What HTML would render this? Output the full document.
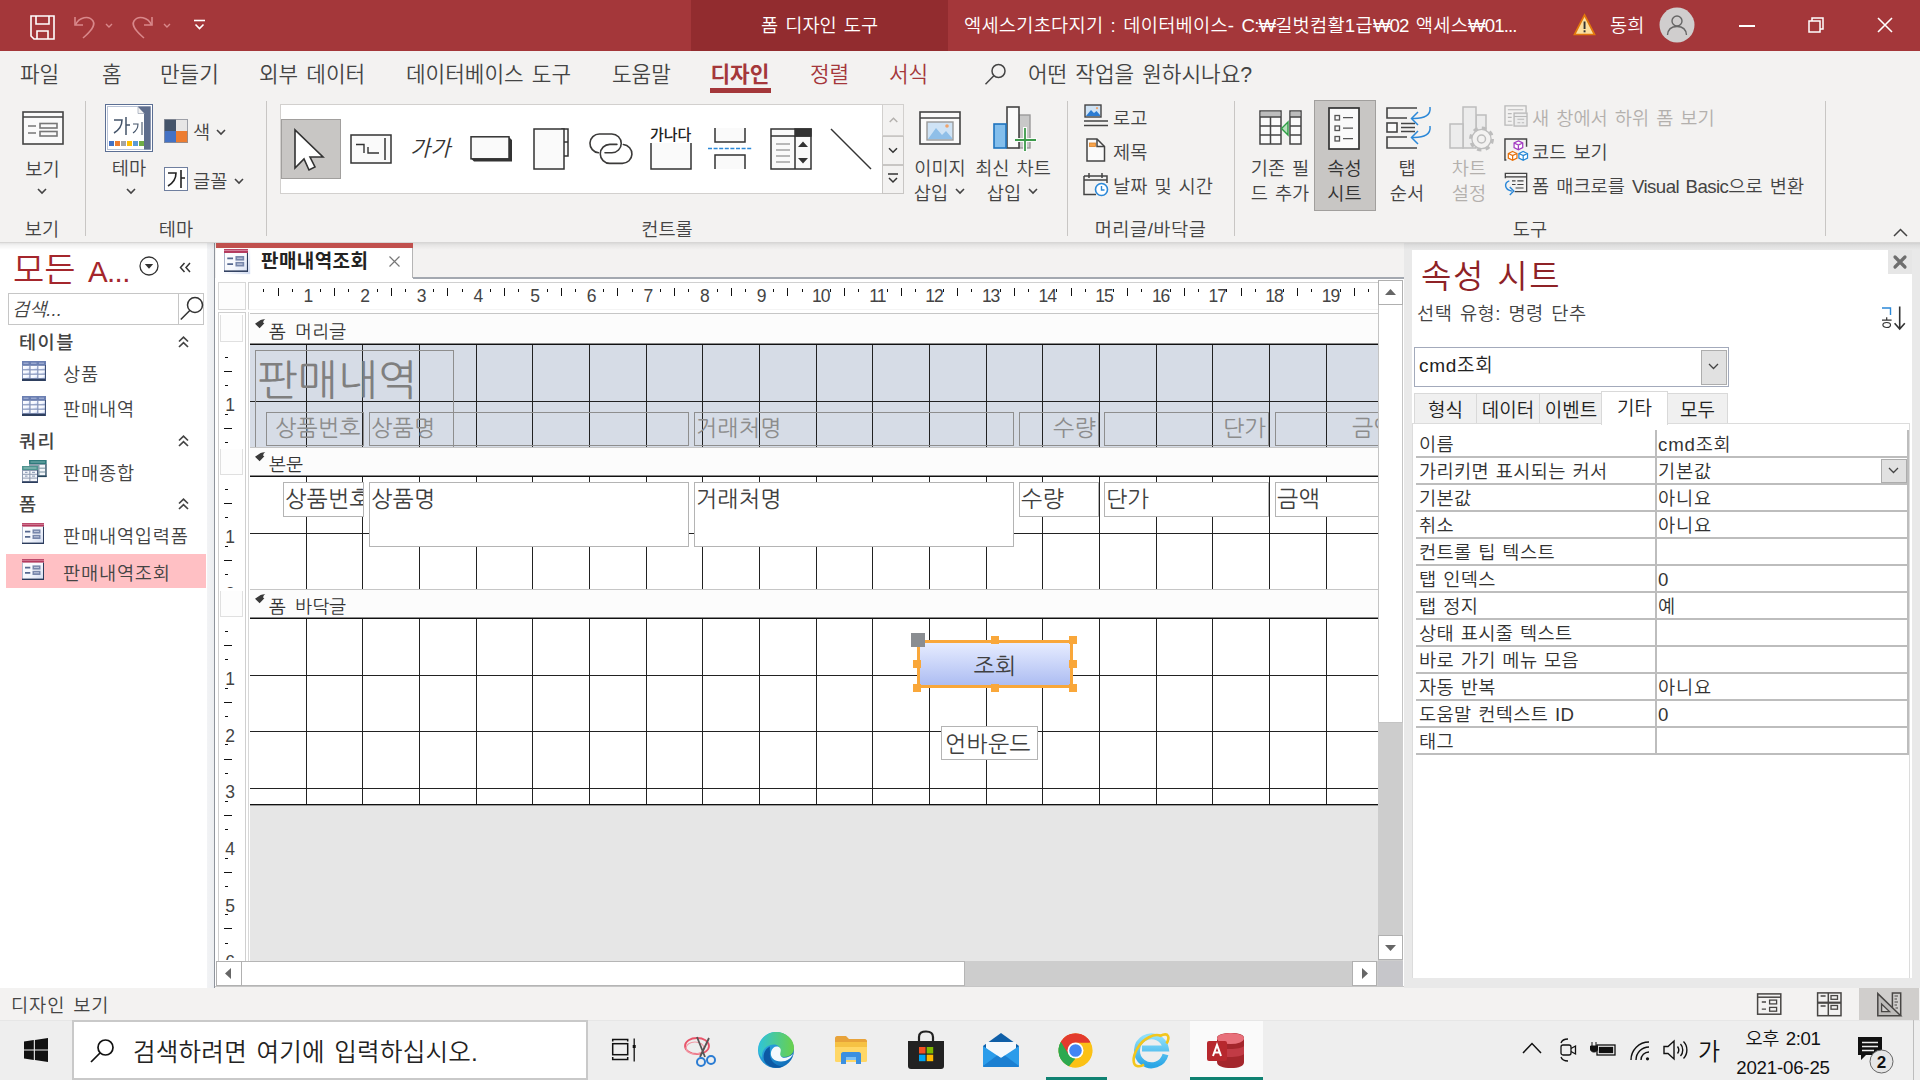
<!DOCTYPE html>
<html lang="ko"><head><meta charset="utf-8"><title>Access</title>
<style>
html,body{margin:0;padding:0}
body{width:1920px;height:1080px;position:relative;overflow:hidden;background:#f3f2f1;
 font-family:"Liberation Sans","Noto Sans CJK KR",sans-serif;color:#444;font-size:18.67px;font-weight:350;}
.a{position:absolute}
.t{position:absolute;white-space:nowrap;line-height:1;letter-spacing:0;word-spacing:0.1em}
svg{position:absolute;overflow:visible}
.g{font-family:"Liberation Sans","NanumGothic","Noto Sans CJK KR",sans-serif}
</style></head>
<body>
<svg width="0" height="0" style="left:0;top:0"><defs>
<linearGradient id="tc" x1="0" y1="0" x2="1" y2="1"><stop offset="0" stop-color="#fff"/><stop offset=".6" stop-color="#f4f7ff"/><stop offset="1" stop-color="#c3d0f0"/></linearGradient>
<linearGradient id="fg" x1="0" y1="0" x2="1" y2="1"><stop offset="0" stop-color="#fff"/><stop offset=".55" stop-color="#f6f8fd"/><stop offset="1" stop-color="#cfd9ef"/></linearGradient>
<linearGradient id="eg1" x1="0" y1="0" x2="1" y2="1"><stop offset="0" stop-color="#35c1f1"/><stop offset="1" stop-color="#0b5fb0"/></linearGradient>
<linearGradient id="eg2" x1="0" y1="0" x2="1" y2="0"><stop offset="0" stop-color="#2fc3d8"/><stop offset="1" stop-color="#6ad14a"/></linearGradient>
<linearGradient id="ieg" x1="0" y1="0" x2="0" y2="1"><stop offset="0" stop-color="#8fe0fb"/><stop offset="1" stop-color="#2ba6e6"/></linearGradient>
</defs></svg>
<div class="a" style="left:0;top:0;width:1920px;height:51px;background:#a4373a"></div>
<div class="a" style="left:691px;top:0;width:257px;height:51px;background:#922c2f"></div>
<svg style="left:29px;top:14px" width="27" height="27" viewBox="0 0 27 27" fill="none" stroke="#fff" stroke-width="1.6">
<path d="M2 2 H25 V25 H5 L2 22 Z"/><path d="M7 2 V10 H20 V2"/><path d="M8 25 V17 H19 V25"/></svg>
<svg style="left:73px;top:14px" width="40" height="27" viewBox="0 0 40 27" fill="none" stroke="#d9888b" stroke-width="1.6">
<path d="M2 3 V11 H10"/><path d="M2.5 11 C6 3 16 1 20 7 C23 12 17 18 10 24"/><path d="M33 10 L36 13 L39 10" stroke-width="1.4"/></svg>
<svg style="left:131px;top:14px" width="42" height="27" viewBox="0 0 42 27" fill="none" stroke="#d9888b" stroke-width="1.6">
<path d="M21 3 V11 H13"/><path d="M20.5 11 C17 3 7 1 3 7 C0 12 6 18 13 24"/><path d="M33 10 L36 13 L39 10" stroke-width="1.4"/></svg>
<svg style="left:193px;top:19px" width="14" height="12" viewBox="0 0 14 12" fill="none" stroke="#fff" stroke-width="1.6">
<path d="M1 1.5 H12"/><path d="M2.5 5.5 L6.5 9.5 L10.5 5.5"/></svg>
<div class="t" style="left:761px;top:17px;font-size:18.67px;color:#fff">폼 디자인 도구</div>
<div class="t" id="ttl" style="left:964px;top:17px;font-size:18.67px;color:#fff;letter-spacing:.25px">엑세스기초다지기 : 데이터베이스- <span style="letter-spacing:-.9px">C:₩</span>길벗컴활1급<span style="letter-spacing:-.9px">₩02</span> 액세스<span style="letter-spacing:-.9px">₩01...</span></div>
<svg style="left:1573px;top:13px" width="23" height="23" viewBox="0 0 23 23">
<path d="M11.5 2 L21.5 21.5 H1.5 Z" fill="#fbdf9e" stroke="#e2780c" stroke-width="1.7" stroke-linejoin="miter"/><rect x="10.6" y="8.5" width="1.9" height="7.5" fill="#333"/><rect x="10.6" y="17.3" width="1.9" height="2" fill="#333"/></svg>
<div class="t" style="left:1610px;top:17px;font-size:18.67px;color:#fff">동희</div>
<svg style="left:1659px;top:7px" width="36" height="36" viewBox="0 0 36 36">
<circle cx="18" cy="18" r="17.5" fill="#d0cece"/><circle cx="18" cy="14" r="5" fill="none" stroke="#666" stroke-width="1.4"/>
<path d="M8.5 28 C9 21 14 19.5 18 19.5 C22 19.5 27 21 27.5 28" fill="none" stroke="#666" stroke-width="1.4"/></svg>
<div class="a" style="left:1739px;top:25px;width:16px;height:2px;background:#fff"></div>
<svg style="left:1808px;top:17px" width="16" height="16" viewBox="0 0 16 16" fill="none" stroke="#fff" stroke-width="1.5">
<rect x="1" y="4" width="11" height="11"/><path d="M4 4 V1 H15 V12 H12"/></svg>
<svg style="left:1877px;top:17px" width="16" height="16" viewBox="0 0 16 16" fill="none" stroke="#fff" stroke-width="1.6">
<path d="M1 1 L15 15 M15 1 L1 15"/></svg>
<div class="t" style="left:20px;top:65px;font-size:21.33px;color:#444;">파일</div>
<div class="t" style="left:102px;top:65px;font-size:21.33px;color:#444;">홈</div>
<div class="t" style="left:160px;top:65px;font-size:21.33px;color:#444;">만들기</div>
<div class="t" style="left:259px;top:65px;font-size:21.33px;color:#444;">외부 데이터</div>
<div class="t" style="left:406px;top:65px;font-size:21.33px;color:#444;">데이터베이스 도구</div>
<div class="t" style="left:612px;top:65px;font-size:21.33px;color:#444;">도움말</div>
<div class="t" style="left:710.5px;top:65px;font-size:21.33px;color:#a4373a;font-weight:bold;">디자인</div>
<div class="t" style="left:810px;top:65px;font-size:21.33px;color:#a4373a;">정렬</div>
<div class="t" style="left:889px;top:65px;font-size:21.33px;color:#a4373a;">서식</div>
<div class="a" style="left:710px;top:88px;width:61px;height:5px;background:#a4373a"></div>
<svg style="left:984px;top:62px" width="24" height="24" viewBox="0 0 24 24" fill="none" stroke="#444" stroke-width="1.5">
<circle cx="14.5" cy="9" r="6.5"/><path d="M9.8 13.8 L1.5 22.2"/></svg>
<div class="t" style="left:1028px;top:65px;font-size:21.33px;color:#444">어떤 작업을 원하시나요?</div>
<div class="a" style="left:0;top:242px;width:1920px;height:8px;z-index:5;background:linear-gradient(rgba(0,0,0,.13),rgba(0,0,0,.05) 40%,rgba(0,0,0,0))"></div>
<div class="a" style="left:85px;top:101px;width:1px;height:135px;background:#c8c6c4"></div>
<div class="a" style="left:266px;top:101px;width:1px;height:135px;background:#c8c6c4"></div>
<div class="a" style="left:1067px;top:101px;width:1px;height:135px;background:#c8c6c4"></div>
<div class="a" style="left:1234px;top:101px;width:1px;height:135px;background:#c8c6c4"></div>
<div class="a" style="left:1825px;top:101px;width:1px;height:135px;background:#c8c6c4"></div>
<div class="t" style="left:-58.0px;top:221.0px;width:200px;text-align:center;font-size:18.67px;color:#444;">보기</div>
<div class="t" style="left:76.0px;top:221.0px;width:200px;text-align:center;font-size:18.67px;color:#444;">테마</div>
<div class="t" style="left:567.0px;top:221.0px;width:200px;text-align:center;font-size:18.67px;color:#444;">컨트롤</div>
<div class="t" style="left:1050.5px;top:221.0px;width:200px;text-align:center;font-size:18.67px;color:#444;"><span style="letter-spacing:.5px">머리글/바닥글</span></div>
<div class="t" style="left:1430.0px;top:221.0px;width:200px;text-align:center;font-size:18.67px;color:#444;">도구</div>
<svg style="left:22px;top:111px" width="42" height="34" viewBox="0 0 42 34" fill="none" stroke="#444" stroke-width="1.6">
<rect x="1" y="1" width="40" height="32" fill="#fafafa"/><path d="M1 6 H41"/><path d="M6 15 H14 M6 22 H14" stroke="#777"/><rect x="18" y="12.5" width="17" height="4.5" stroke="#777"/><rect x="18" y="20.5" width="17" height="4.5" stroke="#777"/></svg>
<div class="t" style="left:-57.5px;top:161.0px;width:200px;text-align:center;font-size:18.67px;color:#444;">보기</div>
<svg style="left:37.0px;top:188.0px" width="10" height="7" viewBox="0 0 10 7" fill="none" stroke="#444" stroke-width="1.6"><path d="M1 1 L5 5 L9 1"/></svg>
<svg style="left:105px;top:104px" width="48" height="48" viewBox="0 0 48 48">
<rect x="0.5" y="0.5" width="47" height="47" fill="#fff" stroke="#5b6f94"/><rect x="2.5" y="2.5" width="43" height="43" fill="#fff" stroke="#b8c2d6"/>
<path d="M33 2.5 H45.5 V45.5 H39 V10 Z" fill="#5e6d8c"/><path d="M33 3 L39.5 9.5 H33 Z" fill="#f2f2f2" stroke="#8a93a8" stroke-width=".6"/>
<g fill="none" stroke="#44546a" stroke-width="1.5"><path d="M9 16 H17 C17 22 14 26 9 29"/><path d="M21 13 V31 M21 21 H25"/><path d="M28 20 H33 C33 24 31 27 28 29" stroke-width="1.1"/><path d="M37 18 V31" stroke-width="1.1"/></g>
<rect x="4" y="37" width="5" height="5" fill="#4472c4"/><rect x="10" y="37" width="5" height="5" fill="#ed7d31"/><rect x="16" y="37" width="5" height="5" fill="#a5a5a5"/><rect x="22" y="37" width="5" height="5" fill="#ffc000"/><rect x="28" y="37" width="5" height="5" fill="#5b9bd5"/><rect x="34" y="37" width="5" height="5" fill="#70ad47"/></svg>
<div class="t" style="left:29.0px;top:160.0px;width:200px;text-align:center;font-size:18.67px;color:#444;">테마</div>
<svg style="left:126.0px;top:188.0px" width="10" height="7" viewBox="0 0 10 7" fill="none" stroke="#444" stroke-width="1.6"><path d="M1 1 L5 5 L9 1"/></svg>
<svg style="left:164px;top:119px" width="24" height="24" viewBox="0 0 24 24"><rect x="0" y="0" width="12" height="12" fill="#44546a"/><rect x="12" y="0" width="12" height="12" fill="#e7e6e6"/><rect x="0" y="12" width="12" height="12" fill="#4472c4"/><rect x="12" y="12" width="12" height="12" fill="#ed7d31"/><rect x=".5" y=".5" width="23" height="23" fill="none" stroke="#8a8f9a" stroke-width=".8"/></svg>
<div class="t" style="left:193.0px;top:124.0px;font-size:18.67px;color:#444;">색</div>
<svg style="left:216.0px;top:129.0px" width="10" height="7" viewBox="0 0 10 7" fill="none" stroke="#444" stroke-width="1.6"><path d="M1 1 L5 5 L9 1"/></svg>
<svg style="left:164px;top:167px" width="24" height="24" viewBox="0 0 24 24"><rect x=".5" y=".5" width="23" height="23" fill="#fff" stroke="#6f7f9f"/>
<g fill="none" stroke="#222" stroke-width="1.6"><path d="M4 6 H12 C12 12 9 16 4 19"/><path d="M17 3 V21 M17 11 H21"/></g></svg>
<div class="t" style="left:193.0px;top:173.0px;font-size:18.67px;color:#444;">글꼴</div>
<svg style="left:234.0px;top:178.0px" width="10" height="7" viewBox="0 0 10 7" fill="none" stroke="#444" stroke-width="1.6"><path d="M1 1 L5 5 L9 1"/></svg>
<div class="a" style="left:280px;top:104px;width:624px;height:90px;background:#fff;border:1px solid #d2d0ce;box-sizing:border-box"></div>
<div class="a" style="left:281px;top:119px;width:60px;height:60px;background:#c8c6c4;border:1px solid #a19f9d;box-sizing:border-box"></div>
<svg style="left:292px;top:127px" width="36" height="44" viewBox="0 0 36 44"><path d="M3 3 V41 L12 32 L17 43 L23 40 L18 30 H31 Z" fill="#fff" stroke="#333" stroke-width="1.6" stroke-linejoin="miter"/></svg>
<svg style="left:350px;top:134px" width="42" height="30" viewBox="0 0 42 30" fill="none" stroke="#333" stroke-width="1.5"><rect x="1" y="1" width="40" height="28" fill="#fafafa"/><path d="M6 10.5 H14 V19 M18 13 V19 H29" stroke-width="1.4"/><path d="M35 4 V26"/></svg>
<div class="t" style="left:410.0px;top:138.0px;font-size:22px;color:#333;font-style:italic">가가</div>
<svg style="left:470px;top:135px" width="43" height="28" viewBox="0 0 43 28"><path d="M4 26.5 H42 V5 L39 2 V23.5 H1 Z" fill="#333"/><rect x="1" y="1.8" width="38" height="22" fill="#fafafa" stroke="#333" stroke-width="1.5"/></svg>
<svg style="left:533px;top:128px" width="37" height="42" viewBox="0 0 37 42" fill="#fafafa" stroke="#333" stroke-width="1.5"><rect x="29" y="1" width="6" height="27"/><path d="M29 14 H35"/><rect x="1" y="1" width="30" height="40"/></svg>
<svg style="left:589px;top:133px" width="44" height="32" viewBox="0 0 44 32" fill="none" stroke="#3b3a39" stroke-width="1.6" stroke-linecap="round"><path d="M16 19.8 H22.85 A9.4 9.4 0 0 0 22.85 1 H10.4 A9.4 9.4 0 0 0 9.6 19.77"/><path d="M27.9 11.4 H20.8 A9.5 9.5 0 0 0 20.8 30.4 H33.4 A9.5 9.5 0 0 0 34.3 11.44"/></svg>
<div class="t" style="left:650.0px;top:127.0px;font-size:15px;color:#222;font-weight:500">가나다</div>
<svg style="left:650px;top:143px" width="42" height="27" viewBox="0 0 42 27"><path d="M1 0 V26 H41 V0" fill="#fafafa" stroke="#333" stroke-width="1.5"/></svg>
<svg style="left:708px;top:128px" width="44" height="42" viewBox="0 0 44 42" fill="#fafafa" stroke="#333" stroke-width="1.5"><path d="M7 0 V14 H37 V0"/><path d="M7 41 V27 H37 V41"/><path d="M0 20.5 H44" stroke="#2b88d8" stroke-dasharray="4 1.6" fill="none"/></svg>
<svg style="left:770px;top:128px" width="42" height="42" viewBox="0 0 42 42" fill="none" stroke="#333" stroke-width="1.5"><rect x="1" y="1" width="40" height="40" fill="#fafafa"/><path d="M1 8 H41 M25 8 V41"/><rect x="25" y="1" width="16" height="7" fill="#333"/><path d="M6 16 H20 M6 22 H20 M6 28 H20 M6 34 H20" stroke="#777" stroke-width="1.2"/><path d="M28 19 L33 13.5 L38 19 Z M28 30 L33 35.5 L38 30 Z" fill="#333" stroke="none"/></svg>
<svg style="left:830px;top:128px" width="42" height="42" viewBox="0 0 42 42"><path d="M1 1 L41 41" stroke="#333" stroke-width="1.5"/></svg>
<div class="a" style="left:882px;top:104px;width:22px;height:32px;background:#f3f2f1;border:1px solid #d2d0ce;box-sizing:border-box"></div>
<div class="a" style="left:882px;top:136px;width:22px;height:29px;background:#f3f2f1;border:1px solid #c8c6c4;box-sizing:border-box"></div>
<div class="a" style="left:882px;top:165px;width:22px;height:29px;background:#f3f2f1;border:1px solid #c8c6c4;box-sizing:border-box"></div>
<svg style="left:889px;top:117px" width="9" height="6" viewBox="0 0 9 6" fill="none" stroke="#b3b0ad" stroke-width="1.4"><path d="M.7 5 L4.5 1.2 L8.3 5"/></svg>
<svg style="left:888px;top:147px" width="10" height="7" viewBox="0 0 10 7" fill="none" stroke="#333" stroke-width="1.5"><path d="M1 1.2 L5 5.2 L9 1.2"/></svg>
<svg style="left:888px;top:173px" width="10" height="11" viewBox="0 0 10 11" fill="none" stroke="#333" stroke-width="1.5"><path d="M0 1 H10"/><path d="M1 5 L5 9 L9 5"/></svg>
<svg style="left:919px;top:111px" width="42" height="34" viewBox="0 0 42 34"><rect x="1" y="1" width="40" height="32" fill="#fafafa" stroke="#444" stroke-width="1.6"/><path d="M1 7 H41" stroke="#444" stroke-width="1.6"/>
<rect x="8" y="11" width="26" height="18" fill="#cfe3f5" stroke="#9a9a9a" stroke-width="1.4"/><path d="M9 28 L17 17 L23 24 L27 20 L33 27 V28 Z" fill="#8fbfe8"/><circle cx="28" cy="15" r="1.8" fill="#f0a36b"/></svg>
<div class="t" style="left:840.0px;top:160.0px;width:200px;text-align:center;font-size:18.67px;color:#444;">이미지</div>
<div class="t" style="left:831.0px;top:185.0px;width:200px;text-align:center;font-size:18.67px;color:#444;">삽입</div>
<svg style="left:955.0px;top:188.0px" width="10" height="7" viewBox="0 0 10 7" fill="none" stroke="#444" stroke-width="1.6"><path d="M1 1 L5 5 L9 1"/></svg>
<svg style="left:992px;top:106px" width="46" height="47" viewBox="0 0 46 47"><rect x="27" y="9" width="11" height="33" fill="#c8c8c8" stroke="#9b9b9b" stroke-width="1.4"/><rect x="15" y="1" width="12" height="41" fill="#fafafa" stroke="#444" stroke-width="1.6"/><rect x="2" y="18" width="12" height="24" fill="#83beec" stroke="#1e73be" stroke-width="1.6"/>
<path d="M33 21 V46 M22 34 H45" stroke="#fafafa" stroke-width="4"/><path d="M33 22 V45 M23 34 H44" stroke="#3c9a4a" stroke-width="1.8"/></svg>
<div class="t" style="left:913.0px;top:160.0px;width:200px;text-align:center;font-size:18.67px;color:#444;">최신 차트</div>
<div class="t" style="left:904.0px;top:185.0px;width:200px;text-align:center;font-size:18.67px;color:#444;">삽입</div>
<svg style="left:1028.0px;top:188.0px" width="10" height="7" viewBox="0 0 10 7" fill="none" stroke="#444" stroke-width="1.6"><path d="M1 1 L5 5 L9 1"/></svg>
<svg style="left:1084px;top:104px" width="24" height="24" viewBox="0 0 24 24"><rect x="1" y="1" width="16" height="12" fill="#cfe3f5" stroke="#444" stroke-width="1.4"/><path d="M2 12 L7 6 L10 9 L12.5 7 L16 11 V12 Z" fill="#2b7cd3"/><circle cx="13" cy="4.2" r="1.1" fill="#f0a36b"/><path d="M0 17 H24 M0 21.5 H24" stroke="#444" stroke-width="1.5"/></svg>
<div class="t" style="left:1113.0px;top:110.0px;font-size:18.67px;color:#444;">로고</div>
<svg style="left:1086px;top:138px" width="20" height="24" viewBox="0 0 20 24"><path d="M1 1 H11 L18.5 8.5 V23 H1 Z" fill="#fafafa" stroke="#444" stroke-width="1.5"/><path d="M11 1 V8.5 H18.5" fill="none" stroke="#444" stroke-width="1.5"/><rect x="3.5" y="5" width="6" height="3.5" fill="#f7a44c" stroke="#d9822b" stroke-width=".8"/></svg>
<div class="t" style="left:1113.0px;top:144.0px;font-size:18.67px;color:#444;">제목</div>
<svg style="left:1083px;top:172px" width="26" height="25" viewBox="0 0 26 25"><path d="M1 4 H24 V11 M13 22.5 H1 V4 M1 8 H24" fill="none" stroke="#444" stroke-width="1.5"/><path d="M6 1 V6 M19 1 V6" stroke="#444" stroke-width="1.5"/><circle cx="18.5" cy="17.5" r="6" fill="#fff" stroke="#2b88d8" stroke-width="1.6"/><path d="M18.5 14 V18 H21.5" fill="none" stroke="#2b88d8" stroke-width="1.4"/></svg>
<div class="t" style="left:1113.0px;top:178.0px;font-size:18.67px;color:#444;">날짜 및 시간</div>
<svg style="left:1259px;top:110px" width="43" height="35" viewBox="0 0 43 35"><g fill="#fafafa" stroke="#444" stroke-width="1.5"><rect x="1" y="1" width="21" height="33"/><rect x="31" y="1" width="11" height="33"/></g><rect x="1.7" y="1.7" width="19.6" height="5" fill="#bdbdbd"/><rect x="31.7" y="1.7" width="9.6" height="5" fill="#bdbdbd"/>
<path d="M1 7 H22 M1 16 H22 M1 25 H22 M11.5 7 V34 M31 7 H42 M31 16 H42 M31 25 H42" stroke="#444" stroke-width="1.5" fill="none"/><path d="M29 12 L22.5 18.5 L29 25 Z" fill="#b7e0bd" stroke="#2e9e44" stroke-width="1.4"/></svg>
<div class="t" style="left:1180.0px;top:160.0px;width:200px;text-align:center;font-size:18.67px;color:#444;">기존 필</div>
<div class="t" style="left:1180.0px;top:185.0px;width:200px;text-align:center;font-size:18.67px;color:#444;">드 추가</div>
<div class="a" style="left:1314px;top:100px;width:62px;height:111px;background:#c8c6c4;border:1px solid #a19f9d;box-sizing:border-box"></div>
<svg style="left:1328px;top:107px" width="32" height="43" viewBox="0 0 32 43"><rect x="1" y="1" width="30" height="41" fill="#fafafa" stroke="#333" stroke-width="1.7"/><g fill="none" stroke="#555" stroke-width="1.3"><rect x="7" y="8.5" width="4.5" height="4.5"/><rect x="7" y="19" width="4.5" height="4.5"/><rect x="7" y="29.5" width="4.5" height="4.5"/><path d="M15 10.7 H25 M15 21.2 H25 M15 31.7 H25"/></g></svg>
<div class="t" style="left:1244.5px;top:160.0px;width:200px;text-align:center;font-size:18.67px;color:#333;">속성</div>
<div class="t" style="left:1244.5px;top:185.0px;width:200px;text-align:center;font-size:18.67px;color:#333;">시트</div>
<svg style="left:1385px;top:106px" width="47" height="44" viewBox="0 0 47 44" fill="none"><path d="M32 2 H2 V12 H22" stroke="#444" stroke-width="1.6"/><rect x="2" y="17" width="10" height="9" stroke="#444" stroke-width="1.6" fill="#fafafa"/><path d="M16 17.5 H30 M16 21.5 H30 M16 25.5 H30" stroke="#444" stroke-width="1.3"/><path d="M22 31 H2 V42 H32" stroke="#444" stroke-width="1.6"/>
<g stroke="#2b88d8" stroke-width="1.5"><path d="M45 1 C46 9 40 13 27 12.5"/><path d="M33 6 L26.5 12.5 L33 19"/><path d="M45 20 C46 28 40 32 27 31.5"/><path d="M33 25 L26.5 31.5 L33 38"/></g></svg>
<div class="t" style="left:1307.0px;top:160.0px;width:200px;text-align:center;font-size:18.67px;color:#444;">탭</div>
<div class="t" style="left:1307.0px;top:185.0px;width:200px;text-align:center;font-size:18.67px;color:#444;">순서</div>
<svg style="left:1449px;top:106px" width="46" height="46" viewBox="0 0 46 46"><g fill="#ececec" stroke="#bdbdbd" stroke-width="1.5"><rect x="27" y="9" width="10" height="25"/><rect x="14" y="1" width="13" height="41"/><rect x="1" y="18" width="13" height="24"/></g>
<circle cx="32.5" cy="33" r="9" fill="#f3f2f1" stroke="#bdbdbd" stroke-width="1.5" stroke-dasharray="4.2 2.9"/><circle cx="32.5" cy="33" r="11" fill="none" stroke="#bdbdbd" stroke-width="3" stroke-dasharray="4.4 4.24"/><circle cx="32.5" cy="33" r="9.6" fill="#f3f2f1"/><circle cx="32.5" cy="33" r="9.6" fill="none" stroke="#bdbdbd" stroke-width="1.3"/><circle cx="32.5" cy="33" r="4" fill="#f3f2f1" stroke="#bdbdbd" stroke-width="1.5"/></svg>
<div class="t" style="left:1369.0px;top:160.0px;width:200px;text-align:center;font-size:18.67px;color:#b3b0ad;">차트</div>
<div class="t" style="left:1369.0px;top:185.0px;width:200px;text-align:center;font-size:18.67px;color:#b3b0ad;">설정</div>
<svg style="left:1504px;top:104px" width="24" height="23" viewBox="0 0 25 24" fill="none" stroke="#b9b9b9" stroke-width="1.4"><path d="M9 22 H1 V2 H23 V9"/><path d="M4 6 H20 M4 10 H8 M4 14 H8 M4 18 H8" stroke-width="1.2"/><rect x="10.5" y="9.5" width="13.5" height="13.5" fill="#ececec"/><path d="M10.5 13 H24 M14 16 H21 M14 19.5 H17 M18.5 19.5 H21" stroke-width="1.1"/></svg>
<div class="t" style="left:1532.0px;top:110.0px;font-size:18.67px;color:#b3b0ad;">새 창에서 하위 폼 보기</div>
<svg style="left:1504px;top:138px" width="24" height="24" viewBox="0 0 25 25" fill="none"><path d="M2.5 23 H1 V1 H23.5 V9" stroke="#444" stroke-width="1.5"/>
<g stroke-width="1.3" fill="#fff"><path d="M15 3 L19.5 5.2 V10 L15 12.2 L10.5 10 V5.2 Z M10.5 5.2 L15 7.4 L19.5 5.2 M15 7.4 V12.2" stroke="#a33bc2"/><path d="M9 14 L13.5 16.2 V21 L9 23.2 L4.5 21 V16.2 Z M4.5 16.2 L9 18.4 L13.5 16.2 M9 18.4 V23.2" stroke="#e8710a"/><path d="M20 14 L24.5 16.2 V21 L20 23.2 L15.5 21 V16.2 Z M15.5 16.2 L20 18.4 L24.5 16.2 M20 18.4 V23.2" stroke="#2488d8"/></g></svg>
<div class="t" style="left:1532.0px;top:144.0px;font-size:18.67px;color:#444;">코드 보기</div>
<svg style="left:1504px;top:172px" width="24" height="24" viewBox="0 0 27 27" fill="none"><path d="M1.5 7 V1.5 H25.5 V22 H12" stroke="#444" stroke-width="1.5"/><path d="M1.5 5.5 H25.5" stroke="#444" stroke-width="1.5"/><path d="M9 10 H13 M15 10 H22 M9 14 H13 M15 14 H22 M13 18 H22" stroke="#444" stroke-width="1.2"/>
<path d="M6 10 C0 12 0 20 9 21.5" stroke="#2b88d8" stroke-width="1.6"/><path d="M6.5 17 L11 21.5 L6.5 26" stroke="#2b88d8" stroke-width="1.6"/></svg>
<div class="t" id="vb" style="left:1532px;top:178px;font-size:18.67px;color:#444">폼 매크로를 <span style="letter-spacing:-0.03em">Visual Basic</span>으로 변환</div>
<svg style="left:1893px;top:228px" width="15" height="9" viewBox="0 0 15 9" fill="none" stroke="#444" stroke-width="1.5"><path d="M1 8 L7.5 1.5 L14 8"/></svg>
<div class="a" style="left:0;top:243px;width:207px;height:745px;background:#fff"></div>
<div class="a" style="left:207px;top:243px;width:7px;height:745px;background:linear-gradient(90deg,#f2f3f5,#eceef1)"></div><div class="a" style="left:213.6px;top:243px;width:1.6px;height:745px;background:#8f949c"></div>
<div class="t" style="left:13.0px;top:253.0px;font-size:34px;color:#a4262c;">모든 <span style="font-size:29.5px;letter-spacing:-0.6px;margin-left:-0.5px">A...</span></div>
<svg style="left:139px;top:256px" width="20" height="20" viewBox="0 0 20 20"><circle cx="10" cy="10" r="9" fill="#fff" stroke="#333" stroke-width="1.3"/><path d="M5.8 8 H14.2 L10 12.8 Z" fill="#333"/></svg>
<svg style="left:179px;top:262px" width="12" height="11" viewBox="0 0 12 11" fill="none" stroke="#333" stroke-width="1.5"><path d="M5.5 1 L1.5 5.5 L5.5 10 M11 1 L7 5.5 L11 10"/></svg>
<div class="a" style="left:8px;top:293px;width:196px;height:32px;background:#fff;border:1px solid #c6c6c6;box-sizing:border-box"></div>
<div class="a" style="left:178px;top:294px;width:1px;height:30px;background:#c6c6c6"></div>
<div class="t" style="left:12.0px;top:301.0px;font-size:18.67px;color:#444;font-style:italic">검색...</div>
<svg style="left:180px;top:296px" width="24" height="25" viewBox="0 0 24 25" fill="none" stroke="#333" stroke-width="1.5"><circle cx="15" cy="9" r="7.5"/><path d="M9.8 14.5 L.8 23.5"/></svg>
<div class="a" style="left:6px;top:554px;width:200px;height:34px;background:#ffc0c4"></div>
<div class="t" style="left:19.0px;top:334.0px;font-size:18.67px;color:#444;font-weight:500;letter-spacing:1.4px">테이블</div>
<svg style="left:178px;top:336px" width="11" height="12" viewBox="0 0 11 12" fill="none" stroke="#444" stroke-width="1.7"><path d="M1 5.5 L5.5 1.2 L10 5.5 M1 11 L5.5 6.7 L10 11"/></svg>
<svg style="left:22px;top:361px" width="24" height="20" viewBox="0 0 24 20"><rect x="0" y="0" width="24" height="20" fill="#8796bb"/><rect x="0" y="0" width="24" height="4.2" fill="#6b7fb2"/><path d="M1.5 2.2 H6.5 M9 2.2 H14.5 M17 2.2 H22" stroke="#aebbdc" stroke-width="1"/>
<g fill="url(#tc)"><rect x="1" y="5" width="6.3" height="3.2"/><rect x="8.6" y="5" width="6.6" height="3.2"/><rect x="16.4" y="5" width="6.4" height="3.2"/><rect x="1" y="9.4" width="6.3" height="3.2"/><rect x="8.6" y="9.4" width="6.6" height="3.2"/><rect x="16.4" y="9.4" width="6.4" height="3.2"/><rect x="1" y="13.8" width="6.3" height="3.2"/><rect x="8.6" y="13.8" width="6.6" height="3.2"/><rect x="16.4" y="13.8" width="6.4" height="3.2"/></g>
<rect x="0" y="17.8" width="24" height="2.2" fill="#2e3f5f"/><rect x="23" y="4" width="1" height="16" fill="#3d4f75"/></svg>
<div class="t" style="left:63.0px;top:365.5px;font-size:18.67px;color:#444;letter-spacing:.8px">상품</div>
<svg style="left:22px;top:396px" width="24" height="20" viewBox="0 0 24 20"><rect x="0" y="0" width="24" height="20" fill="#8796bb"/><rect x="0" y="0" width="24" height="4.2" fill="#6b7fb2"/><path d="M1.5 2.2 H6.5 M9 2.2 H14.5 M17 2.2 H22" stroke="#aebbdc" stroke-width="1"/>
<g fill="url(#tc)"><rect x="1" y="5" width="6.3" height="3.2"/><rect x="8.6" y="5" width="6.6" height="3.2"/><rect x="16.4" y="5" width="6.4" height="3.2"/><rect x="1" y="9.4" width="6.3" height="3.2"/><rect x="8.6" y="9.4" width="6.6" height="3.2"/><rect x="16.4" y="9.4" width="6.4" height="3.2"/><rect x="1" y="13.8" width="6.3" height="3.2"/><rect x="8.6" y="13.8" width="6.6" height="3.2"/><rect x="16.4" y="13.8" width="6.4" height="3.2"/></g>
<rect x="0" y="17.8" width="24" height="2.2" fill="#2e3f5f"/><rect x="23" y="4" width="1" height="16" fill="#3d4f75"/></svg>
<div class="t" style="left:63.0px;top:400.5px;font-size:18.67px;color:#444;letter-spacing:.8px">판매내역</div>
<div class="t" style="left:19.0px;top:433.0px;font-size:18.67px;color:#444;font-weight:500;letter-spacing:1.4px">쿼리</div>
<svg style="left:178px;top:435px" width="11" height="12" viewBox="0 0 11 12" fill="none" stroke="#444" stroke-width="1.7"><path d="M1 5.5 L5.5 1.2 L10 5.5 M1 11 L5.5 6.7 L10 11"/></svg>
<svg style="left:22px;top:460px" width="25" height="23" viewBox="0 0 25 23"><g><rect x="7" y="0" width="17.5" height="17" fill="#8aa0ad"/><rect x="7" y="0" width="17.5" height="4" fill="#2f7a7c"/><path d="M8.5 2 H23" stroke="#7fb5b3" stroke-width="1"/><g fill="#f2f6fa"><rect x="17.5" y="5" width="5.5" height="2.6"/><rect x="17.5" y="8.8" width="5.5" height="2.6"/><rect x="17.5" y="12.6" width="5.5" height="2.6"/></g><rect x="7" y="15.5" width="17.5" height="1.6" fill="#26445a"/><rect x="23.6" y="4" width=".9" height="13" fill="#26445a"/></g>
<g><rect x="0" y="6" width="16" height="17" fill="#8e9bb0"/><rect x="0" y="6" width="16" height="4" fill="#4f9490"/><path d="M1.5 8 H14.5" stroke="#9fcbc6" stroke-width="1"/><g fill="#f4f6fb"><rect x="1" y="11" width="6.3" height="2.8"/><rect x="8.4" y="11" width="6.6" height="2.8"/><rect x="1" y="14.8" width="6.3" height="2.8"/><rect x="8.4" y="14.8" width="6.6" height="2.8"/><rect x="1" y="18.6" width="6.3" height="2.4"/><rect x="8.4" y="18.6" width="6.6" height="2.4"/></g><path d="M3 12.4 H5.5 M10 12.4 H13 M3 16.2 H5.5 M10 16.2 H13" stroke="#98a5bd" stroke-width="1.2"/><rect x="0" y="21.4" width="16" height="1.6" fill="#2b3c5c"/><rect x="15.2" y="10" width=".8" height="13" fill="#3b4d70"/></g></svg>
<div class="t" style="left:63.0px;top:464.5px;font-size:18.67px;color:#444;letter-spacing:.8px">판매종합</div>
<div class="t" style="left:19.0px;top:496.0px;font-size:18.67px;color:#444;font-weight:500;letter-spacing:1.4px">폼</div>
<svg style="left:178px;top:498px" width="11" height="12" viewBox="0 0 11 12" fill="none" stroke="#444" stroke-width="1.7"><path d="M1 5.5 L5.5 1.2 L10 5.5 M1 11 L5.5 6.7 L10 11"/></svg>
<svg style="left:22px;top:523.0px" width="22" height="21" viewBox="0 0 22 21"><rect x="0" y="0" width="22" height="21" fill="url(#fg)"/><rect x="0" y="0" width="22" height="3.6" fill="#b43a5e"/><rect x="0" y=".8" width="22" height=".9" fill="#d88aa2"/><rect x="0" y="3.6" width=".9" height="17" fill="#aab3c9"/>
<path d="M3 8.6 H8.3 M3 13.9 H8.3" stroke="#56688f" stroke-width="1.6"/><rect x="10.5" y="6.4" width="8" height="4.2" fill="#7887ab"/><rect x="10.5" y="11.8" width="8" height="4.2" fill="#7887ab"/><path d="M12 8.4 H17 M12 13.8 H17" stroke="#c3cce0" stroke-width="1"/>
<rect x="21" y="3.6" width="1" height="17.4" fill="#2c3c5c"/><rect x="0" y="19.6" width="22" height="1.4" fill="#2c3c5c"/></svg>
<div class="t" style="left:63.0px;top:528.0px;font-size:18.67px;color:#444;letter-spacing:.8px">판매내역입력폼</div>
<svg style="left:22px;top:559.0px" width="22" height="21" viewBox="0 0 22 21"><rect x="0" y="0" width="22" height="21" fill="url(#fg)"/><rect x="0" y="0" width="22" height="3.6" fill="#b43a5e"/><rect x="0" y=".8" width="22" height=".9" fill="#d88aa2"/><rect x="0" y="3.6" width=".9" height="17" fill="#aab3c9"/>
<path d="M3 8.6 H8.3 M3 13.9 H8.3" stroke="#56688f" stroke-width="1.6"/><rect x="10.5" y="6.4" width="8" height="4.2" fill="#7887ab"/><rect x="10.5" y="11.8" width="8" height="4.2" fill="#7887ab"/><path d="M12 8.4 H17 M12 13.8 H17" stroke="#c3cce0" stroke-width="1"/>
<rect x="21" y="3.6" width="1" height="17.4" fill="#2c3c5c"/><rect x="0" y="19.6" width="22" height="1.4" fill="#2c3c5c"/></svg>
<div class="t" style="left:63.0px;top:564.5px;font-size:18.67px;color:#444;letter-spacing:.8px">판매내역조회</div>
<div class="a" style="left:215px;top:243px;width:1189px;height:36px;background:#f3f2f1"></div>
<div class="a" style="left:215px;top:278px;width:1189px;height:710px;background:#fff"></div>

<div class="a" style="left:412px;top:277px;width:992px;height:2px;background:#a3a8b0"></div>
<div class="a" style="left:216px;top:243px;width:197px;height:36px;background:#fff"></div>
<div class="a" style="left:216px;top:243px;width:197px;height:5px;background:#c0504d;z-index:6"></div>
<div class="a" style="left:412px;top:248px;width:1px;height:30px;background:#b5b5b5"></div>
<svg style="left:224px;top:249.0px" width="24" height="23" viewBox="0 0 22 21"><rect x="0" y="0" width="24" height="23" fill="url(#fg)"/><rect x="0" y="0" width="22" height="3.6" fill="#b43a5e"/><rect x="0" y=".8" width="22" height=".9" fill="#d88aa2"/><rect x="0" y="3.6" width=".9" height="17" fill="#aab3c9"/>
<path d="M3 8.6 H8.3 M3 13.9 H8.3" stroke="#56688f" stroke-width="1.6"/><rect x="10.5" y="6.4" width="8" height="4.2" fill="#7887ab"/><rect x="10.5" y="11.8" width="8" height="4.2" fill="#7887ab"/><path d="M12 8.4 H17 M12 13.8 H17" stroke="#c3cce0" stroke-width="1"/>
<rect x="21" y="3.6" width="1" height="17.4" fill="#2c3c5c"/><rect x="0" y="19.6" width="22" height="1.4" fill="#2c3c5c"/></svg>
<div class="t" style="left:261.0px;top:252.0px;font-size:19px;color:#222;font-weight:bold;letter-spacing:.4px">판매내역조회</div>
<svg style="left:389px;top:256px" width="11" height="11" viewBox="0 0 11 11" stroke="#777" stroke-width="1.2"><path d="M.5 .5 L10.5 10.5 M10.5 .5 L.5 10.5"/></svg>
<div class="a" style="left:1404px;top:243px;width:516px;height:745px;background:#e9e9e9"></div>
<div class="a" style="left:218px;top:282px;width:28px;height:28px;border:1px solid #d8d8d8;box-sizing:border-box;background:#fdfdfd"></div>
<div class="a" style="left:248px;top:282px;width:1130px;height:28px;border:1px solid #d0d0d0;border-right:none;border-bottom-color:#f4f4f4;box-sizing:border-box;background:#fff"></div>
<div class="a" style="left:218px;top:312px;width:28px;height:649px;border:1px solid #cfcfcf;border-bottom:none;box-sizing:border-box;background:#fff"></div>
<div class="a" style="left:248px;top:312px;width:1px;height:649px;background:#d8d8d8"></div>
<div class="a" style="left:263px;top:289px;width:1px;height:3px;background:#111"></div><div class="a" style="left:278px;top:288px;width:1px;height:8px;background:#111"></div><div class="a" style="left:292px;top:289px;width:1px;height:3px;background:#111"></div><div class="t" style="left:292.8px;top:287.5px;width:30px;text-align:center;font-size:17.5px;color:#444;letter-spacing:-0.06em">1</div><div class="a" style="left:320px;top:289px;width:1px;height:3px;background:#111"></div><div class="a" style="left:334px;top:288px;width:1px;height:8px;background:#111"></div><div class="a" style="left:348px;top:289px;width:1px;height:3px;background:#111"></div><div class="t" style="left:349.5px;top:287.5px;width:30px;text-align:center;font-size:17.5px;color:#444;letter-spacing:-0.06em">2</div><div class="a" style="left:377px;top:289px;width:1px;height:3px;background:#111"></div><div class="a" style="left:391px;top:288px;width:1px;height:8px;background:#111"></div><div class="a" style="left:405px;top:289px;width:1px;height:3px;background:#111"></div><div class="t" style="left:406.1px;top:287.5px;width:30px;text-align:center;font-size:17.5px;color:#444;letter-spacing:-0.06em">3</div><div class="a" style="left:433px;top:289px;width:1px;height:3px;background:#111"></div><div class="a" style="left:447px;top:288px;width:1px;height:8px;background:#111"></div><div class="a" style="left:462px;top:289px;width:1px;height:3px;background:#111"></div><div class="t" style="left:462.8px;top:287.5px;width:30px;text-align:center;font-size:17.5px;color:#444;letter-spacing:-0.06em">4</div><div class="a" style="left:490px;top:289px;width:1px;height:3px;background:#111"></div><div class="a" style="left:504px;top:288px;width:1px;height:8px;background:#111"></div><div class="a" style="left:518px;top:289px;width:1px;height:3px;background:#111"></div><div class="t" style="left:519.5px;top:287.5px;width:30px;text-align:center;font-size:17.5px;color:#444;letter-spacing:-0.06em">5</div><div class="a" style="left:547px;top:289px;width:1px;height:3px;background:#111"></div><div class="a" style="left:561px;top:288px;width:1px;height:8px;background:#111"></div><div class="a" style="left:575px;top:289px;width:1px;height:3px;background:#111"></div><div class="t" style="left:576.1px;top:287.5px;width:30px;text-align:center;font-size:17.5px;color:#444;letter-spacing:-0.06em">6</div><div class="a" style="left:603px;top:289px;width:1px;height:3px;background:#111"></div><div class="a" style="left:617px;top:288px;width:1px;height:8px;background:#111"></div><div class="a" style="left:632px;top:289px;width:1px;height:3px;background:#111"></div><div class="t" style="left:632.8px;top:287.5px;width:30px;text-align:center;font-size:17.5px;color:#444;letter-spacing:-0.06em">7</div><div class="a" style="left:660px;top:289px;width:1px;height:3px;background:#111"></div><div class="a" style="left:674px;top:288px;width:1px;height:8px;background:#111"></div><div class="a" style="left:688px;top:289px;width:1px;height:3px;background:#111"></div><div class="t" style="left:689.4px;top:287.5px;width:30px;text-align:center;font-size:17.5px;color:#444;letter-spacing:-0.06em">8</div><div class="a" style="left:717px;top:289px;width:1px;height:3px;background:#111"></div><div class="a" style="left:731px;top:288px;width:1px;height:8px;background:#111"></div><div class="a" style="left:745px;top:289px;width:1px;height:3px;background:#111"></div><div class="t" style="left:746.0px;top:287.5px;width:30px;text-align:center;font-size:17.5px;color:#444;letter-spacing:-0.06em">9</div><div class="a" style="left:773px;top:289px;width:1px;height:3px;background:#111"></div><div class="a" style="left:787px;top:288px;width:1px;height:8px;background:#111"></div><div class="a" style="left:802px;top:289px;width:1px;height:3px;background:#111"></div><div class="t" style="left:805.7px;top:287.5px;width:30px;text-align:center;font-size:17.5px;color:#444;letter-spacing:-0.06em">10</div><div class="a" style="left:830px;top:289px;width:1px;height:3px;background:#111"></div><div class="a" style="left:844px;top:288px;width:1px;height:8px;background:#111"></div><div class="a" style="left:858px;top:289px;width:1px;height:3px;background:#111"></div><div class="t" style="left:862.3px;top:287.5px;width:30px;text-align:center;font-size:17.5px;color:#444;letter-spacing:-0.06em">11</div><div class="a" style="left:887px;top:289px;width:1px;height:3px;background:#111"></div><div class="a" style="left:901px;top:288px;width:1px;height:8px;background:#111"></div><div class="a" style="left:915px;top:289px;width:1px;height:3px;background:#111"></div><div class="t" style="left:919.0px;top:287.5px;width:30px;text-align:center;font-size:17.5px;color:#444;letter-spacing:-0.06em">12</div><div class="a" style="left:943px;top:289px;width:1px;height:3px;background:#111"></div><div class="a" style="left:957px;top:288px;width:1px;height:8px;background:#111"></div><div class="a" style="left:971px;top:289px;width:1px;height:3px;background:#111"></div><div class="t" style="left:975.6px;top:287.5px;width:30px;text-align:center;font-size:17.5px;color:#444;letter-spacing:-0.06em">13</div><div class="a" style="left:1000px;top:289px;width:1px;height:3px;background:#111"></div><div class="a" style="left:1014px;top:288px;width:1px;height:8px;background:#111"></div><div class="a" style="left:1028px;top:289px;width:1px;height:3px;background:#111"></div><div class="t" style="left:1032.3px;top:287.5px;width:30px;text-align:center;font-size:17.5px;color:#444;letter-spacing:-0.06em">14</div><div class="a" style="left:1056px;top:289px;width:1px;height:3px;background:#111"></div><div class="a" style="left:1071px;top:288px;width:1px;height:8px;background:#111"></div><div class="a" style="left:1085px;top:289px;width:1px;height:3px;background:#111"></div><div class="t" style="left:1089.0px;top:287.5px;width:30px;text-align:center;font-size:17.5px;color:#444;letter-spacing:-0.06em">15</div><div class="a" style="left:1113px;top:289px;width:1px;height:3px;background:#111"></div><div class="a" style="left:1127px;top:288px;width:1px;height:8px;background:#111"></div><div class="a" style="left:1141px;top:289px;width:1px;height:3px;background:#111"></div><div class="t" style="left:1145.6px;top:287.5px;width:30px;text-align:center;font-size:17.5px;color:#444;letter-spacing:-0.06em">16</div><div class="a" style="left:1170px;top:289px;width:1px;height:3px;background:#111"></div><div class="a" style="left:1184px;top:288px;width:1px;height:8px;background:#111"></div><div class="a" style="left:1198px;top:289px;width:1px;height:3px;background:#111"></div><div class="t" style="left:1202.2px;top:287.5px;width:30px;text-align:center;font-size:17.5px;color:#444;letter-spacing:-0.06em">17</div><div class="a" style="left:1226px;top:289px;width:1px;height:3px;background:#111"></div><div class="a" style="left:1241px;top:288px;width:1px;height:8px;background:#111"></div><div class="a" style="left:1255px;top:289px;width:1px;height:3px;background:#111"></div><div class="t" style="left:1258.9px;top:287.5px;width:30px;text-align:center;font-size:17.5px;color:#444;letter-spacing:-0.06em">18</div><div class="a" style="left:1283px;top:289px;width:1px;height:3px;background:#111"></div><div class="a" style="left:1297px;top:288px;width:1px;height:8px;background:#111"></div><div class="a" style="left:1311px;top:289px;width:1px;height:3px;background:#111"></div><div class="t" style="left:1315.5px;top:287.5px;width:30px;text-align:center;font-size:17.5px;color:#444;letter-spacing:-0.06em">19</div><div class="a" style="left:1340px;top:289px;width:1px;height:3px;background:#111"></div><div class="a" style="left:1354px;top:288px;width:1px;height:8px;background:#111"></div><div class="a" style="left:1368px;top:289px;width:1px;height:3px;background:#111"></div>
<div class="a" style="left:250px;top:313px;width:1128px;height:31px;background:#fcfcfc;border-top:1px solid #c6c6c6;box-sizing:border-box"></div><div class="a" style="left:220px;top:315px;width:23px;height:27px;background:#fdfdfd;border:1px solid #e0e0e0;border-top:none;box-sizing:border-box"></div><svg style="left:255px;top:319px" width="11" height="10" viewBox="0 0 11 10"><path d="M0 4.8 L5.6 1.1 C7.4 .2 9 0 10.3 .2 C8.6 1.3 7.9 2.5 8.4 4 L9.4 4.2 L4.6 9.2 Z" fill="#3a3a3a"/></svg><div class="t g" style="left:269.0px;top:323.0px;font-size:18px;color:#333;letter-spacing:.3px;word-spacing:3.4px">폼 머리글</div>
<div class="a" style="left:250px;top:344px;width:1128px;height:103px;background:#d6dce6"></div>
<svg style="left:250px;top:344px" width="1128" height="103" viewBox="0 0 1128 103" stroke="#222" stroke-width="1.2" shape-rendering="crispEdges"><path d="M56.5 0 V103"/><path d="M112.5 0 V103"/><path d="M169.5 0 V103"/><path d="M226.5 0 V103"/><path d="M282.5 0 V103"/><path d="M339.5 0 V103"/><path d="M396.5 0 V103"/><path d="M452.5 0 V103"/><path d="M509.5 0 V103"/><path d="M566.5 0 V103"/><path d="M622.5 0 V103"/><path d="M679.5 0 V103"/><path d="M736.5 0 V103"/><path d="M792.5 0 V103"/><path d="M849.5 0 V103"/><path d="M906.5 0 V103"/><path d="M962.5 0 V103"/><path d="M1019.5 0 V103"/><path d="M1076.5 0 V103"/><path d="M0 57.5 H1128"/></svg>
<div class="a" style="left:250px;top:343px;width:1128px;height:1px;background:#8a8a8a"></div><div class="a" style="left:250px;top:344px;width:1128px;height:1px;background:#111"></div>
<div class="a" style="left:250px;top:447px;width:1128px;height:30px;background:#fcfcfc;border-top:1px solid #c6c6c6;box-sizing:border-box"></div><div class="a" style="left:220px;top:449px;width:23px;height:26px;background:#fdfdfd;border:1px solid #e0e0e0;border-top:none;box-sizing:border-box"></div><svg style="left:255px;top:452px" width="11" height="10" viewBox="0 0 11 10"><path d="M0 4.8 L5.6 1.1 C7.4 .2 9 0 10.3 .2 C8.6 1.3 7.9 2.5 8.4 4 L9.4 4.2 L4.6 9.2 Z" fill="#3a3a3a"/></svg><div class="t g" style="left:269.0px;top:456.0px;font-size:18px;color:#333;letter-spacing:.3px;word-spacing:3.4px">본문</div>
<div class="a" style="left:250px;top:477px;width:1128px;height:112px;background:#fff"></div>
<svg style="left:250px;top:476px" width="1128" height="113" viewBox="0 0 1128 113" stroke="#222" stroke-width="1.2" shape-rendering="crispEdges"><path d="M56.5 0 V113"/><path d="M112.5 0 V113"/><path d="M169.5 0 V113"/><path d="M226.5 0 V113"/><path d="M282.5 0 V113"/><path d="M339.5 0 V113"/><path d="M396.5 0 V113"/><path d="M452.5 0 V113"/><path d="M509.5 0 V113"/><path d="M566.5 0 V113"/><path d="M622.5 0 V113"/><path d="M679.5 0 V113"/><path d="M736.5 0 V113"/><path d="M792.5 0 V113"/><path d="M849.5 0 V113"/><path d="M906.5 0 V113"/><path d="M962.5 0 V113"/><path d="M1019.5 0 V113"/><path d="M1076.5 0 V113"/><path d="M0 57.5 H1128"/></svg>
<div class="a" style="left:250px;top:475px;width:1128px;height:1px;background:#8a8a8a"></div><div class="a" style="left:250px;top:476px;width:1128px;height:1px;background:#111"></div>
<div class="a" style="left:250px;top:589px;width:1128px;height:30px;background:#fcfcfc;border-top:1px solid #c6c6c6;box-sizing:border-box"></div><div class="a" style="left:220px;top:591px;width:23px;height:26px;background:#fdfdfd;border:1px solid #e0e0e0;border-top:none;box-sizing:border-box"></div><svg style="left:255px;top:594px" width="11" height="10" viewBox="0 0 11 10"><path d="M0 4.8 L5.6 1.1 C7.4 .2 9 0 10.3 .2 C8.6 1.3 7.9 2.5 8.4 4 L9.4 4.2 L4.6 9.2 Z" fill="#3a3a3a"/></svg><div class="t g" style="left:269.0px;top:598.0px;font-size:18px;color:#333;letter-spacing:.3px;word-spacing:3.4px">폼 바닥글</div>
<div class="a" style="left:250px;top:619px;width:1128px;height:186px;background:#fff"></div>
<svg style="left:250px;top:618px" width="1128" height="187" viewBox="0 0 1128 187" stroke="#222" stroke-width="1.2" shape-rendering="crispEdges"><path d="M56.5 0 V187"/><path d="M112.5 0 V187"/><path d="M169.5 0 V187"/><path d="M226.5 0 V187"/><path d="M282.5 0 V187"/><path d="M339.5 0 V187"/><path d="M396.5 0 V187"/><path d="M452.5 0 V187"/><path d="M509.5 0 V187"/><path d="M566.5 0 V187"/><path d="M622.5 0 V187"/><path d="M679.5 0 V187"/><path d="M736.5 0 V187"/><path d="M792.5 0 V187"/><path d="M849.5 0 V187"/><path d="M906.5 0 V187"/><path d="M962.5 0 V187"/><path d="M1019.5 0 V187"/><path d="M1076.5 0 V187"/><path d="M0 57.5 H1128"/><path d="M0 113.5 H1128"/><path d="M0 170.5 H1128"/></svg>
<div class="a" style="left:250px;top:617px;width:1128px;height:1px;background:#8a8a8a"></div><div class="a" style="left:250px;top:618px;width:1128px;height:1px;background:#111"></div>
<div class="a" style="left:250px;top:804px;width:1128px;height:1px;background:#111"></div><div class="a" style="left:250px;top:805px;width:1128px;height:1px;background:#9a9a9a"></div>
<div class="a" style="left:250px;top:806px;width:1128px;height:155px;background:#e6e6e6"></div>
<div class="a" style="left:225px;top:357px;width:3px;height:1px;background:#111"></div><div class="a" style="left:224px;top:371px;width:8px;height:1px;background:#111"></div><div class="a" style="left:225px;top:385px;width:3px;height:1px;background:#111"></div><div class="t" style="left:224px;top:397.0px;width:12px;text-align:center;font-size:17.5px;color:#444;letter-spacing:0;height:18.0px;overflow:hidden">1</div><div class="a" style="left:225px;top:414px;width:3px;height:1px;background:#111"></div><div class="a" style="left:224px;top:428px;width:8px;height:1px;background:#111"></div><div class="a" style="left:225px;top:442px;width:3px;height:1px;background:#111"></div>
<div class="a" style="left:225px;top:489px;width:3px;height:1px;background:#111"></div><div class="a" style="left:224px;top:503px;width:8px;height:1px;background:#111"></div><div class="a" style="left:225px;top:517px;width:3px;height:1px;background:#111"></div><div class="t" style="left:224px;top:529.0px;width:12px;text-align:center;font-size:17.5px;color:#444;letter-spacing:0;height:18.0px;overflow:hidden">1</div><div class="a" style="left:225px;top:546px;width:3px;height:1px;background:#111"></div><div class="a" style="left:224px;top:560px;width:8px;height:1px;background:#111"></div><div class="a" style="left:225px;top:574px;width:3px;height:1px;background:#111"></div><div class="t" style="left:224px;top:585.7px;width:12px;text-align:center;font-size:17.5px;color:#444;letter-spacing:0;height:2.3px;overflow:hidden">2</div>
<div class="a" style="left:225px;top:631px;width:3px;height:1px;background:#111"></div><div class="a" style="left:224px;top:645px;width:8px;height:1px;background:#111"></div><div class="a" style="left:225px;top:659px;width:3px;height:1px;background:#111"></div><div class="t" style="left:224px;top:671.0px;width:12px;text-align:center;font-size:17.5px;color:#444;letter-spacing:0;height:18.0px;overflow:hidden">1</div><div class="a" style="left:225px;top:688px;width:3px;height:1px;background:#111"></div><div class="a" style="left:224px;top:702px;width:8px;height:1px;background:#111"></div><div class="a" style="left:225px;top:716px;width:3px;height:1px;background:#111"></div><div class="t" style="left:224px;top:727.7px;width:12px;text-align:center;font-size:17.5px;color:#444;letter-spacing:0;height:18.0px;overflow:hidden">2</div><div class="a" style="left:225px;top:744px;width:3px;height:1px;background:#111"></div><div class="a" style="left:224px;top:759px;width:8px;height:1px;background:#111"></div><div class="a" style="left:225px;top:773px;width:3px;height:1px;background:#111"></div><div class="t" style="left:224px;top:784.3px;width:12px;text-align:center;font-size:17.5px;color:#444;letter-spacing:0;height:18.0px;overflow:hidden">3</div><div class="a" style="left:225px;top:801px;width:3px;height:1px;background:#111"></div><div class="a" style="left:224px;top:815px;width:8px;height:1px;background:#111"></div><div class="a" style="left:225px;top:829px;width:3px;height:1px;background:#111"></div><div class="t" style="left:224px;top:841.0px;width:12px;text-align:center;font-size:17.5px;color:#444;letter-spacing:0;height:18.0px;overflow:hidden">4</div><div class="a" style="left:225px;top:858px;width:3px;height:1px;background:#111"></div><div class="a" style="left:224px;top:872px;width:8px;height:1px;background:#111"></div><div class="a" style="left:225px;top:886px;width:3px;height:1px;background:#111"></div><div class="t" style="left:224px;top:897.6px;width:12px;text-align:center;font-size:17.5px;color:#444;letter-spacing:0;height:18.0px;overflow:hidden">5</div><div class="a" style="left:225px;top:914px;width:3px;height:1px;background:#111"></div><div class="a" style="left:224px;top:928px;width:8px;height:1px;background:#111"></div><div class="a" style="left:225px;top:943px;width:3px;height:1px;background:#111"></div><div class="t" style="left:224px;top:954.3px;width:12px;text-align:center;font-size:17.5px;color:#444;letter-spacing:0;height:5.7px;overflow:hidden">6</div>
<div class="a" style="left:255px;top:350px;width:199px;height:97px;border:1px solid #8e8e8e;box-sizing:border-box;border-bottom:none"></div>
<div class="t g" style="left:258.0px;top:360.0px;font-size:42px;color:#7f7f7f;letter-spacing:.4px">판매내역</div>
<div class="a g" style="left:266px;top:412px;width:98px;height:34px;border:1px solid #8e8e8e;box-sizing:border-box;overflow:hidden;white-space:nowrap;font-size:22.5px;line-height:32px;color:#8c8c8c;letter-spacing:.3px;text-align:left;padding:0 2px 0 8px">상품번호</div>
<div class="a g" style="left:369px;top:412px;width:320px;height:34px;border:1px solid #8e8e8e;box-sizing:border-box;overflow:hidden;white-space:nowrap;font-size:22.5px;line-height:32px;color:#8c8c8c;letter-spacing:.3px;text-align:left;padding:0 2px 0 1px">상품명</div>
<div class="a g" style="left:694px;top:412px;width:320px;height:34px;border:1px solid #8e8e8e;box-sizing:border-box;overflow:hidden;white-space:nowrap;font-size:22.5px;line-height:32px;color:#8c8c8c;letter-spacing:.3px;text-align:left;padding:0 2px 0 1px">거래처명</div>
<div class="a g" style="left:1019px;top:412px;width:80px;height:34px;border:1px solid #8e8e8e;box-sizing:border-box;overflow:hidden;white-space:nowrap;font-size:22.5px;line-height:32px;color:#8c8c8c;letter-spacing:.3px;text-align:right;padding:0 2px 0 1px">수량</div>
<div class="a g" style="left:1104px;top:412px;width:165px;height:34px;border:1px solid #8e8e8e;box-sizing:border-box;overflow:hidden;white-space:nowrap;font-size:22.5px;line-height:32px;color:#8c8c8c;letter-spacing:.3px;text-align:right;padding:0 2px 0 1px">단가</div>
<div class="a g" style="left:1275px;top:412px;width:123px;height:34px;border:1px solid #8e8e8e;box-sizing:border-box;overflow:hidden;clip-path:inset(0 20px 0 0);white-space:nowrap;font-size:22.5px;line-height:32px;color:#8c8c8c;letter-spacing:.3px;text-align:right;padding:0 2px 0 1px">금액</div>
<div class="a g" style="left:283px;top:482px;width:81px;height:35px;border:1px solid #b4b4b4;box-sizing:border-box;background:#fff;overflow:hidden;white-space:nowrap;font-size:22.5px;line-height:30px;color:#404040;letter-spacing:.3px;padding:2px 0 0 1px;">상품번호</div>
<div class="a g" style="left:369px;top:482px;width:320px;height:65px;border:1px solid #b4b4b4;box-sizing:border-box;background:#fff;overflow:hidden;white-space:nowrap;font-size:22.5px;line-height:30px;color:#404040;letter-spacing:.3px;padding:2px 0 0 1px;">상품명</div>
<div class="a g" style="left:694px;top:482px;width:320px;height:65px;border:1px solid #b4b4b4;box-sizing:border-box;background:#fff;overflow:hidden;white-space:nowrap;font-size:22.5px;line-height:30px;color:#404040;letter-spacing:.3px;padding:2px 0 0 1px;">거래처명</div>
<div class="a g" style="left:1019px;top:482px;width:80px;height:35px;border:1px solid #b4b4b4;box-sizing:border-box;background:#fff;overflow:hidden;white-space:nowrap;font-size:22.5px;line-height:30px;color:#404040;letter-spacing:.3px;padding:2px 0 0 1px;">수량</div>
<div class="a g" style="left:1104px;top:482px;width:165px;height:35px;border:1px solid #b4b4b4;box-sizing:border-box;background:#fff;overflow:hidden;white-space:nowrap;font-size:22.5px;line-height:30px;color:#404040;letter-spacing:.3px;padding:2px 0 0 1px;">단가</div>
<div class="a g" style="left:1275px;top:482px;width:123px;height:35px;border:1px solid #b4b4b4;box-sizing:border-box;background:#fff;overflow:hidden;white-space:nowrap;font-size:22.5px;line-height:30px;color:#404040;letter-spacing:.3px;padding:2px 0 0 1px;clip-path:inset(0 20px 0 0)">금액</div>
<div class="a g" style="left:917px;top:640px;width:156px;height:48px;background:linear-gradient(#e6ecff,#adbdf2);border:3px solid #f9a73a;box-sizing:border-box;text-align:center;font-size:22.5px;line-height:42px;padding-top:3px;overflow:hidden;color:#404040;letter-spacing:.3px">조회</div>
<div class="a" style="left:913px;top:660px;width:8px;height:8px;background:#f9a73a"></div>
<div class="a" style="left:913px;top:684px;width:8px;height:8px;background:#f9a73a"></div>
<div class="a" style="left:991px;top:636px;width:8px;height:8px;background:#f9a73a"></div>
<div class="a" style="left:991px;top:684px;width:8px;height:8px;background:#f9a73a"></div>
<div class="a" style="left:1069px;top:636px;width:8px;height:8px;background:#f9a73a"></div>
<div class="a" style="left:1069px;top:660px;width:8px;height:8px;background:#f9a73a"></div>
<div class="a" style="left:1069px;top:684px;width:8px;height:8px;background:#f9a73a"></div>
<div class="a" style="left:911px;top:633px;width:14px;height:14px;background:#8a8d91"></div>
<div class="a g" style="left:941px;top:726px;width:97px;height:34px;border:1px solid #b4b4b4;box-sizing:border-box;background:#fff;text-align:left;font-size:22.5px;line-height:30px;color:#404040;letter-spacing:.3px;padding:3px 0 0 3px;white-space:nowrap;overflow:hidden">언바운드</div>
<div class="a" style="left:1378px;top:280px;width:25px;height:682px;background:#cdcdcd"></div>
<div class="a" style="left:1378px;top:280px;width:25px;height:443px;background:#fff;border:1px solid #c4c4c4;box-sizing:border-box"></div>
<div class="a" style="left:1378px;top:280px;width:25px;height:25px;background:#fff;border:1px solid #b0b0b0;box-sizing:border-box"></div>
<svg style="left:1385px;top:289px" width="11" height="6" viewBox="0 0 11 6"><path d="M0 6 L5.5 0 L11 6 Z" fill="#666"/></svg>
<div class="a" style="left:1378px;top:935px;width:25px;height:25px;background:#fff;border:1px solid #b0b0b0;box-sizing:border-box"></div>
<svg style="left:1385px;top:945px" width="11" height="6" viewBox="0 0 11 6"><path d="M0 0 L5.5 6 L11 0 Z" fill="#666"/></svg>
<div class="a" style="left:216px;top:961px;width:1187px;height:25px;background:#cdcdcd"></div>
<div class="a" style="left:1378px;top:961px;width:25px;height:25px;background:#c6c6ca"></div>
<div class="a" style="left:216px;top:961px;width:749px;height:25px;background:#fff;border:1px solid #b5b5b5;box-sizing:border-box"></div>
<div class="a" style="left:216px;top:961px;width:26px;height:25px;background:#fff;border:1px solid #b0b0b0;box-sizing:border-box"></div>
<svg style="left:225px;top:968px" width="6" height="11" viewBox="0 0 6 11"><path d="M6 0 L0 5.5 L6 11 Z" fill="#666"/></svg>
<div class="a" style="left:1352px;top:961px;width:25px;height:25px;background:#fff;border:1px solid #b0b0b0;box-sizing:border-box"></div>
<svg style="left:1362px;top:968px" width="6" height="11" viewBox="0 0 6 11"><path d="M0 0 L6 5.5 L0 11 Z" fill="#666"/></svg>
<div class="a" style="left:215px;top:986px;width:1189px;height:1px;background:#c6c6c6"></div><div class="a" style="left:215px;top:987px;width:1189px;height:1px;background:#f3f2f1"></div>
<div class="a" style="left:1412px;top:250px;width:500px;height:728px;background:#fff"></div>
<div class="a" style="left:1888px;top:250px;width:24px;height:24px;background:#e6e6e6"></div>
<svg style="left:1893px;top:255px" width="14" height="14" viewBox="0 0 14 14" stroke="#6e6e6e" stroke-width="3.2" stroke-linecap="round"><path d="M2 2 L12 12 M12 2 L2 12"/></svg>
<div class="t" style="left:1421.0px;top:260.0px;font-size:33px;color:#8e2226;letter-spacing:1.6px;word-spacing:.05em">속성 시트</div>
<div class="t" style="left:1417.0px;top:305.0px;font-size:18.67px;color:#444;letter-spacing:.5px">선택 유형: 명령 단추</div>
<svg style="left:1881px;top:306px" width="25" height="24" viewBox="0 0 25 24" fill="none"><path d="M1 2 H9.5 V9" stroke="#2b88d8" stroke-width="1.4"/><path d="M5.7 11.3 V13.6 M1 14.2 H10.6" stroke="#333" stroke-width="1.2"/><ellipse cx="5.7" cy="19" rx="3.8" ry="2.5" stroke="#333" stroke-width="1.2"/><path d="M18.7 .5 V22.5 M13.6 17.2 L18.7 23 L23.8 17.2" stroke="#333" stroke-width="1.6"/></svg>
<div class="a" style="left:1414px;top:347px;width:315px;height:40px;background:#fff;border:1px solid #a3aabb;box-sizing:border-box"></div>
<div class="a" style="left:1701px;top:350px;width:26px;height:35px;background:#e1e1e1;border:1px solid #adadad;box-sizing:border-box"></div>
<svg style="left:1708px;top:363px" width="11" height="7" viewBox="0 0 11 7" fill="none" stroke="#444" stroke-width="1.3"><path d="M1 1 L5.5 5.5 L10 1"/></svg>
<div class="t" style="left:1419.0px;top:356.0px;font-size:19px;color:#222;letter-spacing:.7px">cmd조회</div>
<div class="a" style="left:1414px;top:393px;width:63px;height:31px;background:#f0f0f0;border:1px solid #d9d9d9;box-sizing:border-box"></div>
<div class="t" style="left:1345.5px;top:401.0px;width:200px;text-align:center;font-size:19px;color:#222;">형식</div>
<div class="a" style="left:1476px;top:393px;width:64px;height:31px;background:#f0f0f0;border:1px solid #d9d9d9;box-sizing:border-box"></div>
<div class="t" style="left:1408.0px;top:401.0px;width:200px;text-align:center;font-size:19px;color:#222;">데이터</div>
<div class="a" style="left:1539px;top:393px;width:64px;height:31px;background:#f0f0f0;border:1px solid #d9d9d9;box-sizing:border-box"></div>
<div class="t" style="left:1471.0px;top:401.0px;width:200px;text-align:center;font-size:19px;color:#222;">이벤트</div>
<div class="a" style="left:1667px;top:393px;width:61px;height:31px;background:#f0f0f0;border:1px solid #d9d9d9;box-sizing:border-box"></div>
<div class="t" style="left:1597.5px;top:401.0px;width:200px;text-align:center;font-size:19px;color:#222;">모두</div>
<div class="a" style="left:1412px;top:423px;width:498px;height:555px;border:1px solid #dcdcdc;border-bottom:none;box-sizing:border-box"></div>
<div class="a" style="left:1601px;top:391px;width:67px;height:34px;background:#fff;border:1px solid #d9d9d9;border-bottom:none;box-sizing:border-box"></div>
<div class="t" style="left:1534.5px;top:399.0px;width:200px;text-align:center;font-size:19px;color:#222;">기타</div>
<div class="a" style="left:1416px;top:456px;width:492px;height:2px;background:#bdbdbd"></div>
<div class="t" style="left:1419.0px;top:436.0px;font-size:18.67px;color:#333;letter-spacing:.35px;word-spacing:.06em">이름</div>
<div class="t" style="left:1658.0px;top:436.0px;font-size:18.67px;color:#333;letter-spacing:.8px">cmd조회</div>
<div class="a" style="left:1416px;top:483px;width:492px;height:2px;background:#bdbdbd"></div>
<div class="t" style="left:1419.0px;top:463.0px;font-size:18.67px;color:#333;letter-spacing:.35px;word-spacing:.06em">가리키면 표시되는 커서</div>
<div class="t" style="left:1658.0px;top:463.0px;font-size:18.67px;color:#333;letter-spacing:.8px">기본값</div>
<div class="a" style="left:1416px;top:510px;width:492px;height:2px;background:#bdbdbd"></div>
<div class="t" style="left:1419.0px;top:490.0px;font-size:18.67px;color:#333;letter-spacing:.35px;word-spacing:.06em">기본값</div>
<div class="t" style="left:1658.0px;top:490.0px;font-size:18.67px;color:#333;letter-spacing:.8px">아니요</div>
<div class="a" style="left:1416px;top:537px;width:492px;height:2px;background:#bdbdbd"></div>
<div class="t" style="left:1419.0px;top:517.0px;font-size:18.67px;color:#333;letter-spacing:.35px;word-spacing:.06em">취소</div>
<div class="t" style="left:1658.0px;top:517.0px;font-size:18.67px;color:#333;letter-spacing:.8px">아니요</div>
<div class="a" style="left:1416px;top:564px;width:492px;height:2px;background:#bdbdbd"></div>
<div class="t" style="left:1419.0px;top:544.0px;font-size:18.67px;color:#333;letter-spacing:.35px;word-spacing:.06em">컨트롤 팁 텍스트</div>
<div class="a" style="left:1416px;top:591px;width:492px;height:2px;background:#bdbdbd"></div>
<div class="t" style="left:1419.0px;top:571.0px;font-size:18.67px;color:#333;letter-spacing:.35px;word-spacing:.06em">탭 인덱스</div>
<div class="t" style="left:1658.0px;top:571.0px;font-size:18.67px;color:#333;letter-spacing:.8px">0</div>
<div class="a" style="left:1416px;top:618px;width:492px;height:2px;background:#bdbdbd"></div>
<div class="t" style="left:1419.0px;top:598.0px;font-size:18.67px;color:#333;letter-spacing:.35px;word-spacing:.06em">탭 정지</div>
<div class="t" style="left:1658.0px;top:598.0px;font-size:18.67px;color:#333;letter-spacing:.8px">예</div>
<div class="a" style="left:1416px;top:645px;width:492px;height:2px;background:#bdbdbd"></div>
<div class="t" style="left:1419.0px;top:625.0px;font-size:18.67px;color:#333;letter-spacing:.35px;word-spacing:.06em">상태 표시줄 텍스트</div>
<div class="a" style="left:1416px;top:672px;width:492px;height:2px;background:#bdbdbd"></div>
<div class="t" style="left:1419.0px;top:652.0px;font-size:18.67px;color:#333;letter-spacing:.35px;word-spacing:.06em">바로 가기 메뉴 모음</div>
<div class="a" style="left:1416px;top:699px;width:492px;height:2px;background:#bdbdbd"></div>
<div class="t" style="left:1419.0px;top:679.0px;font-size:18.67px;color:#333;letter-spacing:.35px;word-spacing:.06em">자동 반복</div>
<div class="t" style="left:1658.0px;top:679.0px;font-size:18.67px;color:#333;letter-spacing:.8px">아니요</div>
<div class="a" style="left:1416px;top:726px;width:492px;height:2px;background:#bdbdbd"></div>
<div class="t" style="left:1419.0px;top:706.0px;font-size:18.67px;color:#333;letter-spacing:.35px;word-spacing:.06em">도움말 컨텍스트 ID</div>
<div class="t" style="left:1658.0px;top:706.0px;font-size:18.67px;color:#333;letter-spacing:.8px">0</div>
<div class="a" style="left:1416px;top:753px;width:492px;height:2px;background:#bdbdbd"></div>
<div class="t" style="left:1419.0px;top:733.0px;font-size:18.67px;color:#333;letter-spacing:.35px;word-spacing:.06em">태그</div>
<div class="a" style="left:1655px;top:430px;width:2px;height:325px;background:#bdbdbd"></div>
<div class="a" style="left:1907px;top:430px;width:2px;height:325px;background:#bdbdbd"></div>
<div class="a" style="left:1881px;top:459px;width:26px;height:24px;background:#e1e1e1;border:1px solid #adadad;box-sizing:border-box"></div>
<svg style="left:1888px;top:467px" width="11" height="7" viewBox="0 0 11 7" fill="none" stroke="#444" stroke-width="1.3"><path d="M1 1 L5.5 5.5 L10 1"/></svg>
<div class="a" style="left:0;top:988px;width:1920px;height:32px;background:#f3f2f1"></div>
<div class="t" style="left:11.0px;top:997.0px;font-size:18.67px;color:#444;letter-spacing:.9px">디자인 보기</div>
<div class="a" style="left:1859px;top:988px;width:60px;height:32px;background:#d0cecc"></div>
<svg style="left:1756px;top:992px" width="26" height="24" viewBox="0 0 26 24" fill="none" stroke="#484644" stroke-width="1.5"><rect x="1.6" y="1.9" width="23.2" height="20.3"/><path d="M1.6 5.2 H24.8"/><path d="M5.8 10 H10 M5.8 17.2 H10" stroke-width="1.3"/><rect x="13.6" y="8.1" width="7" height="3.8" stroke-width="1.3"/><rect x="13.6" y="15.4" width="7" height="3.8" stroke-width="1.3"/></svg>
<svg style="left:1816px;top:991px" width="26" height="26" viewBox="0 0 26 26" fill="none" stroke="#484644" stroke-width="1.5"><rect x="1.6" y="1.9" width="23.4" height="22.8"/><path d="M12.3 1.9 V24.7"/><path d="M1.6 11.7 H25" stroke-width="2.2"/><path d="M4.6 5 H9.6 M4.6 15 H9.6" stroke-width="1.3"/><rect x="15" y="4.6" width="6.5" height="3.7" stroke-width="1.3"/><rect x="15" y="14.5" width="6.5" height="3.7" stroke-width="1.3"/></svg>
<svg style="left:1876px;top:991px" width="26" height="26" viewBox="0 0 26 26" fill="none" stroke="#484644" stroke-width="1.5"><path d="M16.4 16.4 V1.9 H24.7 V24.7" fill="#d0cecc"/><path d="M1.8 2.6 V24.7 H24.7 Z" fill="#bdbbb9"/><path d="M5.6 13 V20.6 H13.5 Z" fill="#d0cecc" stroke-width="1.3"/><path d="M18.5 5 H22 M18.5 8 H21 M18.5 11 H22 M18.5 14 H21 M19.5 17 H22" stroke-width="1.1"/></svg>
<div class="a" style="left:0;top:1020px;width:1920px;height:60px;background:#eeeeee"></div>
<div class="a" style="left:0;top:1020px;width:1920px;height:1px;background:#e6e6e6"></div>
<svg style="left:24px;top:1038px" width="24" height="24" viewBox="0 0 24 24" fill="#111"><path d="M0 3.4 L9.8 2 V11.4 H0 Z M10.9 1.9 L24 0 V11.4 H10.9 Z M0 12.5 H9.8 V21.9 L0 20.5 Z M10.9 12.5 H24 V24 L10.9 22.1 Z"/></svg>
<div class="a" style="left:72px;top:1020px;width:516px;height:60px;background:#fff;border:2px solid #c9c9c9;box-sizing:border-box"></div>
<svg style="left:90px;top:1038px" width="25" height="25" viewBox="0 0 25 25" fill="none" stroke="#111" stroke-width="1.7"><circle cx="15.5" cy="9.5" r="7.5"/><path d="M10 15 L1 24"/></svg>
<div class="t" style="left:133.0px;top:1041.0px;font-size:24.5px;color:#222;letter-spacing:.25px">검색하려면 여기에 입력하십시오.</div>
<svg style="left:611px;top:1037px" width="26" height="26" viewBox="0 0 26 26" fill="none" stroke="#111" stroke-width="1.5"><rect x="1.7" y="6.7" width="15" height="11"/><path d="M1.7 4.5 V2.5 H16.7 V4.5 M1.7 20 V22.5 H16.7 V20"/><path d="M23.2 1.5 V24.5" stroke-width="1.3"/><rect x="21.7" y="8" width="3" height="3" fill="#111" stroke="none"/></svg>
<svg style="left:683px;top:1033px" width="36" height="36" viewBox="0 0 36 36" fill="none"><ellipse cx="14" cy="13" rx="12" ry="8" stroke="#e8546a" stroke-width="1.8"/><ellipse cx="12" cy="15" rx="9" ry="6" stroke="#f29aa6" stroke-width="1.2"/><path d="M14 4 L22 24 M26 5 L17 24" stroke="#555" stroke-width="1.8"/><circle cx="18" cy="29" r="4" stroke="#2b7cd3" stroke-width="2"/><circle cx="28" cy="27" r="4" stroke="#2b7cd3" stroke-width="2"/></svg>
<svg style="left:757px;top:1031px" width="38" height="38" viewBox="0 0 38 38">
<circle cx="19" cy="19" r="18" fill="url(#eg1)"/><path d="M1.5 17 C3 7 11 1 19 1 C29 1 37 8 37 17 C37 23 32 26 27 26 C23 26 21 24 22.5 21 C24 18 22 13.5 17 13.5 C10 13.5 4 19 5 27 C2.5 24 1 21 1.5 17 Z" fill="url(#eg2)"/><path d="M13 21 C12 28 17 35 26 35.5 C21 38 12 37 8 31 C5 26 7 18 13 15.5 C12.5 17.5 13 19 13 21 Z" fill="#0c59a4"/><path d="M14 21 C15 16 20 14 23 17 C25 19.5 22.5 22 23.5 24.5 C25 28 31 27.5 36 23 C34.5 27 30 30.5 24 30.5 C17 30.5 13 26.5 14 21 Z" fill="#f4f9fd"/></svg>
<svg style="left:834px;top:1035px" width="34" height="30" viewBox="0 0 34 30"><path d="M1 3 C1 2 2 1 3 1 H12 L15 4 H31 C32 4 33 5 33 6 V10 H1 Z" fill="#e8a33a"/><rect x="1" y="7" width="32" height="20" rx="1.5" fill="#ffd766"/><rect x="1" y="7" width="32" height="5" fill="#f6c244"/><path d="M7 29 V19 C7 18 8 17 9 17 H25 C26 17 27 18 27 19 V29 H22 V22 H12 V29 Z" fill="#3b8fe0"/><rect x="12" y="22" width="10" height="3" fill="#7cc0f5"/></svg>
<svg style="left:907px;top:1030px" width="38" height="40" viewBox="0 0 38 40"><path d="M12 11 V7 C12 3 15 1.5 19 1.5 C23 1.5 26 3 26 7 V11" fill="none" stroke="#222" stroke-width="2.2"/><path d="M1 11 H37 V36 C37 38 36 39 34 39 H4 C2 39 1 38 1 36 Z" fill="#222"/><rect x="12" y="17" width="6.5" height="6.5" fill="#f25022"/><rect x="19.7" y="17" width="6.5" height="6.5" fill="#7fba00"/><rect x="12" y="24.7" width="6.5" height="6.5" fill="#00a4ef"/><rect x="19.7" y="24.7" width="6.5" height="6.5" fill="#ffb900"/></svg>
<svg style="left:982px;top:1032px" width="38" height="36" viewBox="0 0 38 36"><path d="M1 14 L19 1 L37 14 V33 C37 34 36 35 35 35 H3 C2 35 1 34 1 33 Z" fill="#0f5fa8"/><path d="M4 10 H34 V28 H4 Z" fill="#f4f8fc"/><path d="M1 14 L19 26 L37 14 V33 C37 34 36 35 35 35 H3 C2 35 1 34 1 33 Z" fill="#2b9cea"/><path d="M1 34 L15 23.5 L19 26 L23 23.5 L37 34 C37 35 36 35 35 35 H3 C2 35 1 35 1 34 Z" fill="#1b7fd1"/></svg>
<svg style="left:1058px;top:1033px" width="35" height="35" viewBox="0 0 35 35"><circle cx="17.5" cy="17.5" r="17" fill="#fbc116"/><path d="M17.5 17.5 L2.8 9 A17 17 0 0 1 32.2 9 Z" fill="#e33b2e"/><path d="M2.8 9 A17 17 0 0 0 11 33.2 L17.5 17.5 Z" fill="#2da94f"/><path d="M17.5 9.5 H32.4 A17 17 0 0 1 11 33.2 L 17.5 21Z" fill="#fbc116"/><path d="M17.5 9.5 H32.4 A17 17 0 0 0 2.8 9 L 10.5 21.5 Z" fill="#e33b2e"/><path d="M2.8 9 L10.5 21.5 L17.5 25.5 L11 33.2 A17 17 0 0 1 2.8 9Z" fill="#2da94f"/><circle cx="17.5" cy="17.5" r="8" fill="#fff"/><circle cx="17.5" cy="17.5" r="6.3" fill="#4285f4"/></svg>
<div class="a" style="left:1046px;top:1077px;width:61px;height:3px;background:#108272"></div>
<svg style="left:1131px;top:1030px" width="40" height="40" viewBox="0 0 40 40" fill="none">
<path d="M34.5 24.5 A14.5 14.5 0 1 1 34.8 18.5 H11" stroke="url(#ieg)" stroke-width="6" /><path d="M8 21.5 H34.5" stroke="url(#ieg)" stroke-width="5.5"/>
<path d="M30 6 C24 3 12 8 6 19 C1 28 2 35 6 36 C8 36.6 11 36 13 34.5" stroke="#f3c61c" stroke-width="2.6"/><path d="M29 6 C33 4 36 4 37 6 C38 8 37 11 35.5 13.5" stroke="#f3c61c" stroke-width="2.6"/></svg>
<div class="a" style="left:1190px;top:1021px;width:73px;height:59px;background:#fafafa"></div>
<div class="a" style="left:1190px;top:1077px;width:73px;height:3px;background:#108272"></div>
<svg style="left:1207px;top:1032px" width="38" height="37" viewBox="0 0 38 37"><path d="M10 6 C10 2.5 16 1 24 1 C32 1 37 2.5 37 6 V30 C37 34 32 36 24 36 C16 36 10 34 10 30 Z" fill="#a4262c"/><ellipse cx="23.5" cy="6.5" rx="13.5" ry="5.5" fill="#e8707a"/><path d="M10 14 C12 18 34 18 37 14 V22 C34 26 12 26 10 22 Z" fill="#c13b45"/><rect x="0" y="9" width="20" height="20" rx="2" fill="#b7282e"/><path d="M6 24 L10 13 L14 24 M7.5 20.5 H12.5" stroke="#fff" stroke-width="2" fill="none"/></svg>
<svg style="left:1522px;top:1042px" width="20" height="12" viewBox="0 0 20 12" fill="none" stroke="#111" stroke-width="1.5"><path d="M1 11 L10 1.5 L19 11"/></svg>
<svg style="left:1559px;top:1038px" width="18" height="24" viewBox="0 0 18 24" fill="none" stroke="#111" stroke-width="1.3"><rect x="2" y="7" width="10" height="10" rx="2"/><path d="M12 10.5 L16.5 8 V16 L12 13.5"/><path d="M2 5 C3 2 6 1 9 1 M2 19 C3 22 6 23 9 23"/></svg>
<svg style="left:1590px;top:1041px" width="26" height="17" viewBox="0 0 26 17" fill="none" stroke="#111" stroke-width="1.3"><rect x="7" y="4" width="18" height="10"/><rect x="9.5" y="6.5" width="13" height="5" fill="#111"/><path d="M5 7.5 V10.5"/><path d="M2 1 V5 M6 1 V5 M.5 5 H7.5 V8 C7.5 10 6 11 4 11 C2 11 .5 10 .5 8 Z" fill="#111" stroke-width="1"/></svg>
<svg style="left:1629px;top:1040px" width="22" height="22" viewBox="0 0 22 22" fill="none" stroke="#111" stroke-width="1.4"><path d="M2 20 A18 18 0 0 1 20 2"/><path d="M7 20 A13 13 0 0 1 20 7"/><path d="M12 20 A8 8 0 0 1 20 12"/><circle cx="18.5" cy="18.8" r="1.6" fill="#111" stroke="none"/></svg>
<svg style="left:1663px;top:1039px" width="24" height="22" viewBox="0 0 24 22" fill="none" stroke="#111" stroke-width="1.4"><path d="M1 7.5 H5 L11 2 V20 L5 14.5 H1 Z"/><path d="M14.5 7.5 C16 9.5 16 12.5 14.5 14.5 M17.5 5 C20.5 8 20.5 14 17.5 17 M20.5 2.5 C25 7 25 15 20.5 19.5"/></svg>
<div class="t" style="left:1698.0px;top:1040.0px;font-size:24px;color:#111;">가</div>
<div class="t" style="left:1683.0px;top:1030.0px;width:200px;text-align:center;font-size:18.67px;color:#111;letter-spacing:-0.02em">오후 2:01</div>
<div class="t" style="left:1683.0px;top:1059.0px;width:200px;text-align:center;font-size:18.67px;color:#111;letter-spacing:-0.01em">2021-06-25</div>
<svg style="left:1857px;top:1036px" width="26" height="26" viewBox="0 0 26 26"><path d="M1 1 H25 V19 H9 L4 24 V19 H1 Z" fill="#111"/><path d="M5 6.5 H21 M5 10.5 H21 M5 14.5 H17" stroke="#eee" stroke-width="1.3"/></svg>
<svg style="left:1869px;top:1049px" width="25" height="25" viewBox="0 0 25 25"><circle cx="12.5" cy="12.5" r="11.5" fill="#e6e6e6" stroke="#666" stroke-width="1"/></svg>
<div class="t" style="left:1781.5px;top:1054.0px;width:200px;text-align:center;font-size:17px;color:#111;font-weight:bold;letter-spacing:0">2</div>
<div class="a" style="left:1913px;top:1020px;width:1px;height:60px;background:#bdbdbd"></div>
</body></html>
